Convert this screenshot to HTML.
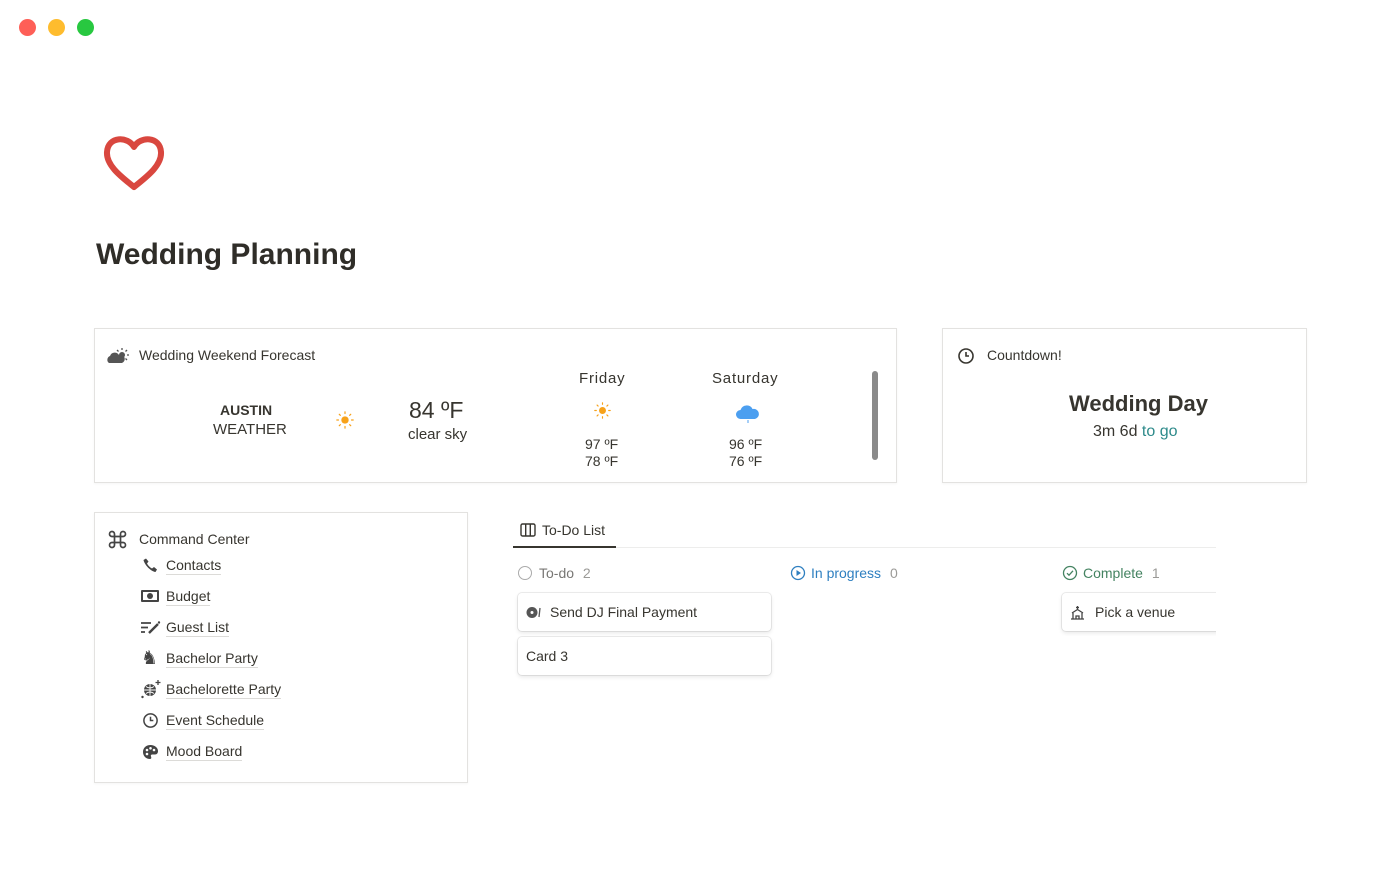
<!DOCTYPE html>
<html><head><meta charset="utf-8"><style>
*{margin:0;padding:0;box-sizing:border-box}
body{width:1400px;height:875px;background:#fff;font-family:"Liberation Sans",sans-serif;color:#37352f;position:relative;overflow:hidden}
.a{position:absolute;white-space:nowrap}
.box{position:absolute;border:1px solid #e3e2e0;box-shadow:0 1px 2px rgba(0,0,0,.04)}
.dot{position:absolute;width:17px;height:17px;border-radius:50%;top:19px}
.lnk{font-size:14px;border-bottom:1px solid #dcdbd8;line-height:17px}
.card{position:absolute;border-radius:4px;box-shadow:0 0 0 1px rgba(15,15,15,.08),0 2px 4px rgba(15,15,15,.1);background:#fff;font-size:14px}
</style></head><body>
<div class="dot" style="left:19px;background:#fe5f57"></div>
<div class="dot" style="left:48px;background:#febc2e"></div>
<div class="dot" style="left:77px;background:#28c840"></div>

<svg class="a" style="left:103px;top:133px" width="62" height="58" viewBox="0 0 62 58"><path d="M31 14C25 3 5 3 4 19C3 33 20 45 31 54C42 45 59 33 58 19C57 3 37 3 31 14Z" fill="none" stroke="#d9473f" stroke-width="6" stroke-linejoin="round"/></svg>
<div class="a" style="left:96px;top:238px;font-size:30px;font-weight:bold;color:#2f2d28">Wedding Planning</div>

<div class="box" style="left:94px;top:328px;width:803px;height:155px"></div>
<svg class="a" style="left:106px;top:347px" width="24" height="18" viewBox="0 0 24 18"><path d="M3 16a4 4 0 0 1 1-7 5 5 0 0 1 9-1 4 4 0 0 1 3 8z" fill="#555"/><circle cx="16" cy="8" r="3" fill="#555"/><path d="M16 1v2M21 3l-1.5 1.5M23 8h-2M21 13l-1.5-1.5M11 3l1.5 1.5" stroke="#555" stroke-width="1.3"/></svg>
<div class="a" style="left:139px;top:347px;font-size:14px">Wedding Weekend Forecast</div>
<div class="a" style="left:220px;top:402px;font-size:14px;font-weight:bold">AUSTIN</div>
<div class="a" style="left:213px;top:421px;font-size:15px">WEATHER</div>
<svg class="a" style="left:336px;top:411px" width="18" height="18" viewBox="0 0 22 22"><circle cx="11" cy="11" r="4.5" fill="#f7a21b"/><g stroke="#f7a21b" stroke-width="1.5" stroke-linecap="round"><path d="M11 1v2M11 19v2M1 11h2M19 11h2M4 4l1.3 1.3M16.7 16.7L18 18M4 18l1.3-1.3M16.7 5.3L18 4"/></g></svg>
<div class="a" style="left:409px;top:397px;font-size:23px">84 ºF</div>
<div class="a" style="left:408px;top:426px;font-size:15px">clear sky</div>
<div class="a" style="left:579px;top:370px;font-size:15px;letter-spacing:.8px">Friday</div>
<svg class="a" style="left:594px;top:402px" width="17" height="17" viewBox="0 0 22 22"><circle cx="11" cy="11" r="4.5" fill="#f7a21b"/><g stroke="#f7a21b" stroke-width="1.5" stroke-linecap="round"><path d="M11 1v2M11 19v2M1 11h2M19 11h2M4 4l1.3 1.3M16.7 16.7L18 18M4 18l1.3-1.3M16.7 5.3L18 4"/></g></svg>
<div class="a" style="left:585px;top:436px;font-size:14px">97 ºF</div>
<div class="a" style="left:585px;top:453px;font-size:14px">78 ºF</div>
<div class="a" style="left:712px;top:370px;font-size:15px;letter-spacing:.8px">Saturday</div>
<svg class="a" style="left:735px;top:401px" width="26" height="24" viewBox="0 0 26 24"><path d="M5.5 18a4.5 4.5 0 0 1 0-9 6.5 6.5 0 0 1 12-1 5 5 0 0 1 2.5 10z" fill="#4c9ff0"/><path d="M13 19v3" stroke="#4c9ff0" stroke-width="1"/></svg>
<div class="a" style="left:729px;top:436px;font-size:14px">96 ºF</div>
<div class="a" style="left:729px;top:453px;font-size:14px">76 ºF</div>
<div class="a" style="left:872px;top:371px;width:6px;height:89px;border-radius:3px;background:#8a8a8a"></div>

<div class="box" style="left:942px;top:328px;width:365px;height:155px"></div>
<svg class="a" style="left:957px;top:347px" width="18" height="18" viewBox="0 0 18 18"><circle cx="9" cy="9" r="7" fill="none" stroke="#37352f" stroke-width="1.6"/><path d="M9 5v4h3" fill="none" stroke="#37352f" stroke-width="1.6"/></svg>
<div class="a" style="left:987px;top:347px;font-size:14px">Countdown!</div>
<div class="a" style="left:1069px;top:391px;font-size:22px;font-weight:bold">Wedding Day</div>
<div class="a" style="left:1093px;top:423px;font-size:16px">3m 6d <span style="color:#2d8a8a">to go</span></div>

<div class="box" style="left:94px;top:512px;width:374px;height:271px"></div>
<svg class="a" style="left:108px;top:530px" width="19" height="19" viewBox="0 0 19 19"><path d="M6.5 6.5h6v6h-6zM6.5 6.5V4a2.5 2.5 0 1 0-2.5 2.5h2.5M12.5 6.5V4a2.5 2.5 0 1 1 2.5 2.5h-2.5M6.5 12.5V15a2.5 2.5 0 1 1-2.5-2.5h2.5M12.5 12.5V15a2.5 2.5 0 1 0 2.5-2.5h-2.5" fill="none" stroke="#444" stroke-width="1.7"/></svg>
<div class="a" style="left:139px;top:531px;font-size:14px">Command Center</div>
<svg class="a" style="left:142px;top:557px" width="17" height="17" viewBox="0 0 17 17"><path d="M4 1.5l2.5 3-1.5 2c1 2 3 4 5 5l2-1.5 3 2.5-1.5 2.5C9 14.5 2.5 8 1.5 3z" fill="#444"/></svg>
<div class="a lnk" style="left:166px;top:557px">Contacts</div>
<div class="a" style="left:141px;top:590px;width:18px;height:12px;border:2px solid #444;border-radius:1px"><div style="width:6px;height:6px;border-radius:50%;background:#444;margin:1px auto"></div></div>
<div class="a lnk" style="left:166px;top:588px">Budget</div>
<svg class="a" style="left:140px;top:620px" width="21" height="15" viewBox="0 0 21 15"><path d="M1 3h10M1 7.5h7M1 12h4" stroke="#444" stroke-width="1.8"/><path d="M9 13l9-9" stroke="#444" stroke-width="2.4"/><circle cx="19" cy="2.5" r="1.2" fill="#444"/></svg>
<div class="a lnk" style="left:166px;top:619px">Guest List</div>
<div class="a" style="left:141px;top:647px;font-size:19px;color:#444">♞</div>
<div class="a lnk" style="left:166px;top:650px">Bachelor Party</div>
<svg class="a" style="left:140px;top:679px" width="22" height="20" viewBox="0 0 22 20"><circle cx="10" cy="11" r="6" fill="#444"/><path d="M4 11h12M10 5v12M6 7.5q4 3 8 0M6 14.5q4-3 8 0" stroke="#fff" stroke-width=".9" fill="none"/><path d="M18 1v5M15.5 3.5h5" stroke="#444" stroke-width="1.3"/><circle cx="2.5" cy="18" r="1.2" fill="#444"/></svg>
<div class="a lnk" style="left:166px;top:681px">Bachelorette Party</div>
<svg class="a" style="left:142px;top:712px" width="17" height="17" viewBox="0 0 18 18"><circle cx="9" cy="9" r="7" fill="none" stroke="#444" stroke-width="1.6"/><path d="M9 5v4h3" fill="none" stroke="#444" stroke-width="1.6"/></svg>
<div class="a lnk" style="left:166px;top:712px">Event Schedule</div>
<svg class="a" style="left:142px;top:744px" width="17" height="16" viewBox="0 0 17 16"><path d="M8.5 1C4 1 1 4 1 8s3 7 7 7c1.5 0 1.5-1.5 1-2.5s0-2 1.5-2H13c2 0 3-1.5 3-3.5C16 3.5 12.5 1 8.5 1z" fill="#444"/><circle cx="5" cy="6" r="1.3" fill="#fff"/><circle cx="8.5" cy="4.3" r="1.3" fill="#fff"/><circle cx="12" cy="6" r="1.3" fill="#fff"/><circle cx="5" cy="10" r="1.3" fill="#fff"/></svg>
<div class="a lnk" style="left:166px;top:743px">Mood Board</div>

<svg class="a" style="left:520px;top:523px" width="16" height="14" viewBox="0 0 16 14"><rect x="1" y="1" width="14" height="12" rx="1.5" fill="none" stroke="#37352f" stroke-width="1.4"/><path d="M5.7 1v12M10.3 1v12" stroke="#37352f" stroke-width="1.4"/></svg>
<div class="a" style="left:542px;top:522px;font-size:14px">To-Do List</div>
<div class="a" style="left:513px;top:547px;width:703px;height:1px;background:#ededec"></div>
<div class="a" style="left:513px;top:546px;width:103px;height:2px;background:#37352f"></div>

<div class="a" style="left:518px;top:566px;width:14px;height:14px;border-radius:50%;border:1px solid #aaa"></div>
<div class="a" style="left:539px;top:565px;font-size:14px;color:#787774">To-do <span style="margin-left:5px;color:#9b9a97">2</span></div>
<svg class="a" style="left:790px;top:565px" width="16" height="16" viewBox="0 0 16 16"><circle cx="8" cy="8" r="6.5" fill="none" stroke="#2e7fc0" stroke-width="1.3"/><path d="M6.5 5v6l4.5-3z" fill="#2e7fc0"/></svg>
<div class="a" style="left:811px;top:565px;font-size:14px;color:#2e7fc0">In progress <span style="margin-left:5px;color:#9b9a97">0</span></div>
<svg class="a" style="left:1062px;top:565px" width="16" height="16" viewBox="0 0 16 16"><circle cx="8" cy="8" r="6.5" fill="none" stroke="#448361" stroke-width="1.3"/><path d="M5 8.2l2 2 4-4.4" fill="none" stroke="#448361" stroke-width="1.3"/></svg>
<div class="a" style="left:1083px;top:565px;font-size:14px;color:#448361">Complete <span style="margin-left:5px;color:#9b9a97">1</span></div>

<div class="card" style="left:518px;top:593px;width:253px;height:38px"><svg class="a" style="left:8px;top:13px" width="16" height="13" viewBox="0 0 16 13"><circle cx="6" cy="6.5" r="5.5" fill="#555"/><circle cx="6" cy="6.5" r="1.5" fill="#fff"/><path d="M14 2l-1 9" stroke="#555" stroke-width="1.3"/></svg><span class="a" style="left:32px;top:11px">Send DJ Final Payment</span></div>
<div class="card" style="left:518px;top:637px;width:253px;height:38px"><span class="a" style="left:8px;top:11px">Card 3</span></div>
<div class="card" style="left:1062px;top:593px;width:160px;height:38px;clip-path:inset(-5px 6px -5px -5px)"><svg class="a" style="left:8px;top:12px" width="15" height="15" viewBox="0 0 15 15"><path d="M7.5 1v3M6 2.5h3M2 8l5.5-3.5L13 8M3 8v6h9V8M1 14h13M6 14v-3h3v3" fill="none" stroke="#444" stroke-width="1.3"/></svg><span class="a" style="left:33px;top:11px">Pick a venue</span></div>
</body></html>
